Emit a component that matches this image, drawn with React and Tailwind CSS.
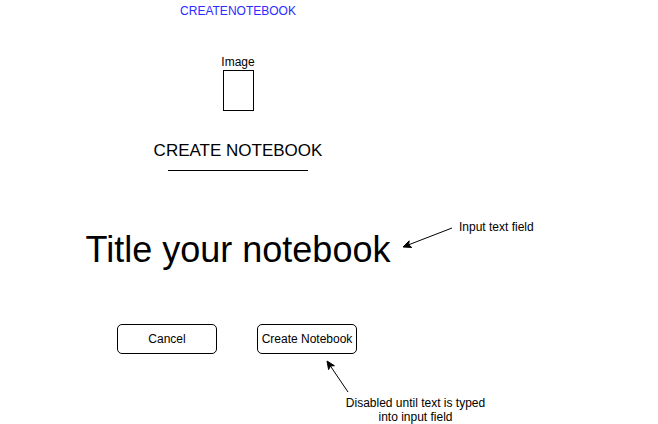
import React from "react";

// wireframe: create notebook dialog
export default function App() {
  return (
    <div
      className="relative w-[658px] h-[424px] bg-white text-black overflow-hidden"
      style={{ fontFamily: '"Liberation Sans", Arial, sans-serif' }}
    >
      <div className="flex flex-col items-center w-[476px]">
        <div className="mt-[4px] text-[12px] leading-[14px] text-[#2b2bff]">
          CREATENOTEBOOK
        </div>

        {/* image placeholder */}
        <div className="mt-[37px] text-[12px] leading-[14px]">Image</div>
        <div className="mt-px w-[31px] h-[41px] border border-black" />

        <h1 className="mt-[30px] text-[17px] leading-[20px]">CREATE NOTEBOOK</h1>
        <div className="mt-[9px] w-[140px] h-px bg-black" />

        {/* input field */}
        <div className="mt-[61px] text-[36px] leading-[36px]">Title your notebook</div>

        <div className="mt-[56px] mr-[2px] flex gap-[40px]">
          <button className="w-[100px] h-[30px] border border-black rounded-[5px] text-[12px] bg-white">
            Cancel
          </button>
          <button className="w-[100px] h-[30px] border border-black rounded-[5px] text-[12px] bg-white">
            Create Notebook
          </button>
        </div>
      </div>

      {/* annotations */}
      <div className="absolute left-[459px] top-[220px] text-[12px] leading-[14px]">
        Input text field
      </div>
      <div className="absolute left-[325px] top-[396px] w-[181px] text-center text-[12px] leading-[14px]">
        Disabled until text is typed
        <br />
        into input field
      </div>
      <svg className="absolute inset-0 pointer-events-none" width="658" height="424">
        <line x1="452" y1="228" x2="408.6" y2="244.8" stroke="black" strokeWidth="1" />
        <path d="M403 247 L409.2 240.8 L408.6 244.8 L411.7 247.4 Z" fill="black" stroke="black" strokeWidth="1" />
        <line x1="348" y1="392" x2="330.4" y2="366" stroke="black" strokeWidth="1" />
        <path d="M327 361 L334.4 365.7 L330.4 366 L328.6 369.6 Z" fill="black" stroke="black" strokeWidth="1" />
      </svg>
    </div>
  );
}
